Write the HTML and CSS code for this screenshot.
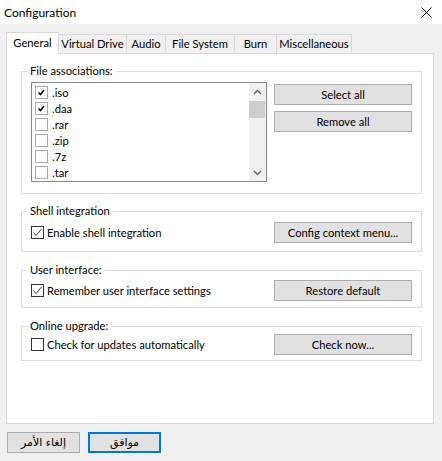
FILE: index.html
```html
<!DOCTYPE html>
<html>
<head>
<meta charset="utf-8">
<link rel="stylesheet" href="styles.css">
</head>
<body>
<div class="window">
  <div class="titlebar">
    <span class="title">Configuration</span>
    <svg class="close" width="11" height="11" viewBox="0 0 11 11"><path d="M0.5 0.5 L10.5 10.5 M10.5 0.5 L0.5 10.5" stroke="#000" stroke-width="1" fill="none"/></svg>
  </div>
  <div class="tabs">
    <div class="tab active t-general">General</div>
    <div class="tab t-vd">Virtual Drive</div>
    <div class="tab t-audio">Audio</div>
    <div class="tab t-fs">File System</div>
    <div class="tab t-burn">Burn</div>
    <div class="tab t-misc">Miscellaneous</div>
  </div>
  <div class="panel">
    <fieldset class="group g-files">
      <legend>File associations:</legend>
      <div class="files-row">
        <div class="listbox">
          <ul class="items">
            <li><span class="lcheck"><svg width="11" height="11" viewBox="0 0 11 11"><path d="M2.5 5.5 L4.5 7.5 L8 3" stroke="#000" stroke-width="1.5" fill="none"/></svg></span>.iso</li>
            <li><span class="lcheck"><svg width="11" height="11" viewBox="0 0 11 11"><path d="M2.5 5.5 L4.5 7.5 L8 3" stroke="#000" stroke-width="1.5" fill="none"/></svg></span>.daa</li>
            <li><span class="lcheck"></span>.rar</li>
            <li><span class="lcheck"></span>.zip</li>
            <li><span class="lcheck"></span>.7z</li>
            <li><span class="lcheck"></span>.tar</li>
          </ul>
          <div class="scrollbar">
            <span class="arrow"><svg width="9" height="6" viewBox="0 0 9 6"><path d="M1 5 L4.5 1.5 L8 5" stroke="#606060" stroke-width="1.3" fill="none"/></svg></span>
            <span class="thumb"></span>
            <span class="track"></span>
            <span class="arrow"><svg width="9" height="6" viewBox="0 0 9 6"><path d="M1 1 L4.5 4.5 L8 1" stroke="#606060" stroke-width="1.3" fill="none"/></svg></span>
          </div>
        </div>
        <div class="btn-col">
          <button class="btn">Select all</button>
          <button class="btn">Remove all</button>
        </div>
      </div>
    </fieldset>

    <fieldset class="group g-shell">
      <legend>Shell integration</legend>
      <div class="row">
        <label class="check"><span class="box"><svg width="11" height="11" viewBox="0 0 11 11"><path d="M1.5 5.5 L4 8.5 L9.5 2" stroke="#333" stroke-width="1" fill="none"/></svg></span>Enable shell integration</label>
        <button class="btn">Config context menu...</button>
      </div>
    </fieldset>

    <fieldset class="group g-ui">
      <legend>User interface:</legend>
      <div class="row">
        <label class="check"><span class="box"><svg width="11" height="11" viewBox="0 0 11 11"><path d="M1.5 5.5 L4 8.5 L9.5 2" stroke="#333" stroke-width="1" fill="none"/></svg></span>Remember user interface settings</label>
        <button class="btn">Restore default</button>
      </div>
    </fieldset>

    <fieldset class="group g-online">
      <legend>Online upgrade:</legend>
      <div class="row">
        <label class="check"><span class="box"></span>Check for updates automatically</label>
        <button class="btn">Check now...</button>
      </div>
    </fieldset>
  </div>
  <div class="footer">
    <button class="btn small" dir="rtl">إلغاء الأمر</button>
    <button class="btn small default" dir="rtl">موافق</button>
  </div>
</div>
</body>
</html>
```
FILE: styles.css
```css
* { box-sizing: border-box; }
html, body { margin: 0; padding: 0; }
body {
  width: 442px;
  height: 461px;
  background: #f0f0f0;
  font-family: Lato, "Liberation Sans", "DejaVu Sans", sans-serif;
  font-size: 11.2px;
  color: #000;
  overflow: hidden;
}
.window { display: flex; flex-direction: column; height: 461px; }

.titlebar {
  height: 24px;
  background: #fff;
  display: flex;
  align-items: center;
  justify-content: space-between;
  padding: 0 10px 0 4px;
}
.title { font-size: 12px; }
.close { display: block; }

.tabs {
  display: flex;
  align-items: flex-end;
  height: 21px;
  margin-top: 8px;
  padding-left: 6px;
  position: relative;
  z-index: 2;
}
.tab {
  height: 19px;
  line-height: 18px;
  text-align: center;
  background: #f0f0f0;
  border: 1px solid #d9d9d9;
  border-bottom: none;
  border-left: none;
  white-space: nowrap;
}
.tab.active {
  height: 22px;
  margin-bottom: -1px;
  background: #fff;
  border-left: 1px solid #d9d9d9;
  line-height: 20px;
}
.t-general { width: 53px; }
.t-vd { width: 68px; }
.t-audio { width: 39px; }
.t-fs { width: 69px; }
.t-burn { width: 42px; }
.t-misc { width: 75px; }

.panel {
  margin-left: 6px;
  width: 428px;
  height: 371px;
  background: #fff;
  border: 1px solid #d9d9d9;
  padding: 9px 11px 0 14px;
  display: flex;
  flex-direction: column;
}

.group {
  margin: 0;
  min-width: 0;
  border: 1px solid #dcdcdc;
  padding: 0 9px 0 9px;
}
.group legend {
  padding: 0 3px;
  margin-left: -4px;
  line-height: 16px;
  height: 16px;
}
.g-files { padding-top: 3px; padding-bottom: 11px; }
.g-shell { margin-top: 9px; padding-top: 3px; padding-bottom: 8px; }
.g-ui { margin-top: 10px; padding-top: 2px; padding-bottom: 6px; }
.g-online { margin-top: 10px; padding-top: 0; padding-bottom: 5px; }

.files-row { display: flex; justify-content: space-between; align-items: flex-start; }
.listbox {
  width: 236px;
  height: 100px;
  border: 1px solid #828790;
  display: flex;
}
.items {
  list-style: none;
  margin: 0;
  padding: 1px 0 0 3px;
  flex: 1;
}
.items li {
  height: 16px;
  display: flex;
  align-items: center;
  gap: 4px;
}
.lcheck {
  width: 13px;
  height: 13px;
  border: 1px solid #a8a8a8;
  display: flex;
  align-items: center;
  justify-content: center;
}
.lcheck svg { display: block; }
.scrollbar {
  width: 17px;
  background: #f0f0f0;
  display: flex;
  flex-direction: column;
}
.arrow {
  height: 17px;
  display: flex;
  align-items: center;
  justify-content: center;
}
.thumb {
  height: 17px;
  margin: 1px 1px 0 0;
  background: #cdcdcd;
}
.track { flex: 1; }

.btn-col {
  display: flex;
  flex-direction: column;
  gap: 6px;
  margin-top: 2px;
}
.btn {
  width: 138px;
  height: 21px;
  background: #e1e1e1;
  border: 1px solid #adadad;
  font-family: inherit;
  font-size: 11.2px;
  color: #000;
  padding: 0;
  margin: 0;
}

.row {
  display: flex;
  align-items: center;
  justify-content: space-between;
}
.check {
  display: flex;
  align-items: center;
  gap: 3px;
}
.box {
  width: 13px;
  height: 13px;
  border: 1px solid #333;
  background: #fff;
  display: flex;
  align-items: center;
  justify-content: center;
}
.box svg { display: block; }

.footer {
  display: flex;
  gap: 8px;
  padding: 8px 0 0 7px;
}
.btn.small {
  width: 73px;
  font-family: "DejaVu Sans", sans-serif;
  font-size: 11px;
}
.btn.default {
  border: 2px solid #0078d7;
}
```
